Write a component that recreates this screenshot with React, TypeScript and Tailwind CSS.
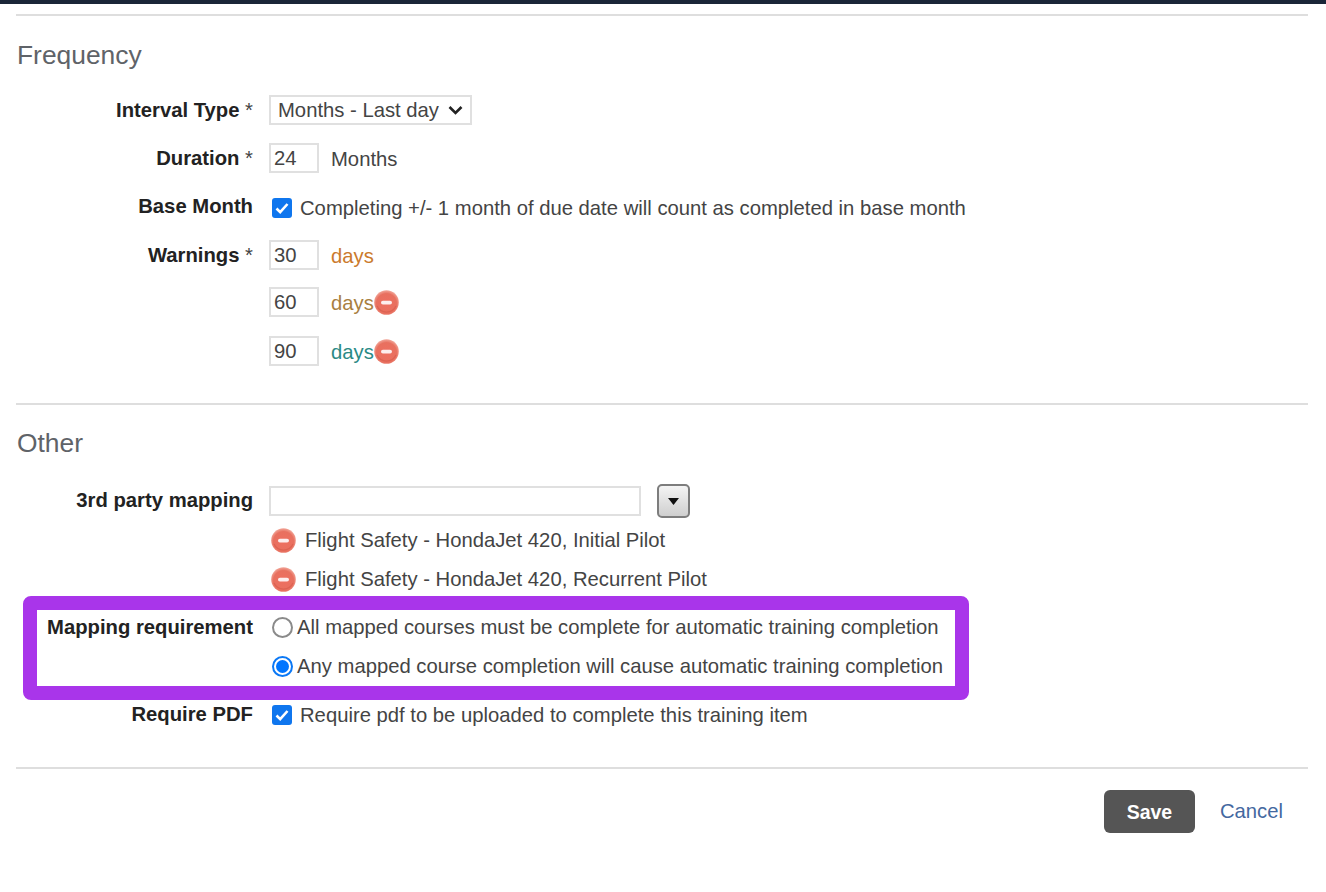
import { ReactNode } from "react";

// ── small pieces ─────────────────────────────────────────────────────────

function RemoveIcon() {
  return (
    <svg viewBox="0 0 25 25" className="w-[25px] h-[25px] shrink-0">
      <defs>
        <radialGradient id="removeFill" cx="0.5" cy="0.55" r="0.55">
          <stop offset="0" stopColor="#ee6f60" />
          <stop offset="0.75" stopColor="#e8705f" />
          <stop offset="1" stopColor="#f2a99c" />
        </radialGradient>
      </defs>
      <circle cx="12.5" cy="12.5" r="12.3" fill="url(#removeFill)" />
      <path d="M3 16 A10.5 10.5 0 0 0 22 16" fill="none" stroke="#dd6252" strokeWidth="1.2" />
      <rect x="7" y="10.7" width="11" height="3.8" rx="1.9" fill="#fdeeee" />
    </svg>
  );
}

function CheckBox() {
  return (
    <span className="w-[20px] h-[20px] shrink-0 rounded-[3px] bg-[#0f76ee] flex items-center justify-center">
      <svg viewBox="0 0 20 20" className="w-[20px] h-[20px]" fill="none">
        <path d="M4.5 10.5 L8.2 14.2 L15.5 6" stroke="#fff" strokeWidth="2.6" />
      </svg>
    </span>
  );
}

function Radio({ checked }: { checked?: boolean }) {
  return checked ? (
    <span className="w-[21px] h-[21px] shrink-0 rounded-full border-2 border-[#0b78f5] flex items-center justify-center">
      <span className="w-[13px] h-[13px] rounded-full bg-[#0075ff]" />
    </span>
  ) : (
    <span className="w-[21px] h-[21px] shrink-0 rounded-full border-2 border-[#8a8a8a] bg-white" />
  );
}

function NumBox({ value }: { value: string }) {
  return (
    <span className="w-[50px] h-[30px] shrink-0 border-2 border-[#e0e0e0] bg-white pl-[3px] flex items-center text-[#444]">
      {value}
    </span>
  );
}

function Unit({ className, children }: { className?: string; children: ReactNode }) {
  return <span className={`ml-[12px] h-[30px] leading-[32px] ${className ?? ""}`}>{children}</span>;
}

function Row({
  label, star, className, contentClassName, children,
}: {
  label?: string;
  star?: boolean;
  className?: string;
  contentClassName?: string;
  children: ReactNode;
}) {
  return (
    <div className={`flex ${className ?? ""}`}>
      <div className="w-[253px] shrink-0 text-right font-bold text-[#222]">
        {label}
        {star && <span className="font-normal text-[#444]"> *</span>}
      </div>
      <div className={`pl-[16px] flex items-center ${contentClassName ?? ""}`}>{children}</div>
    </div>
  );
}

function SectionTitle({ children }: { children: ReactNode }) {
  return <h2 className="text-[26.4px] leading-[30px] text-[#5f6368] pl-[1px]">{children}</h2>;
}

export default function App() {
  return (
    <div className="w-[1326px] h-[892px] bg-white overflow-hidden text-[20.25px] leading-[30px] text-[#444] font-['Liberation_Sans',Arial,sans-serif]">
      <div className="h-[4px] bg-[#1a2638]" />

      <div className="px-[16px] w-[1308px] box-content">
        <hr className="mt-[10px] border-0 h-[2px] bg-[#dedede] w-[1292px]" />

        {/* Frequency */}
        <div className="mt-[24px]">
          <SectionTitle>Frequency</SectionTitle>
        </div>

        <div className="-ml-[16px] mt-[25px]">
          <Row label="Interval Type" star>
            <span className="w-[203px] h-[30px] border-2 border-[#e0e0e0] pl-[7px] pr-[7px] flex items-center justify-between">
              Months - Last day
              <svg viewBox="0 0 15 10" className="w-[15px] h-[10px]" fill="none">
                <path d="M1.5 2 L7.5 8 L13.5 2" stroke="#222" strokeWidth="2.6" />
              </svg>
            </span>
          </Row>
          <Row label="Duration" star className="mt-[18px]">
            <NumBox value="24" />
            <Unit>Months</Unit>
          </Row>
          <Row label="Base Month" className="mt-[18px]" contentClassName="pt-[2px]">
            <span className="pl-[3px]"><CheckBox /></span>
            <span className="ml-[8px]">Completing +/- 1 month of due date will count as completed in base month</span>
          </Row>
          <Row label="Warnings" star className="mt-[17px]">
            <NumBox value="30" />
            <Unit className="text-[#cb7a2c]">days</Unit>
          </Row>
          <Row className="mt-[17px]">
            <NumBox value="60" />
            <Unit className="text-[#a9803f]">days</Unit>
            <RemoveIcon />
          </Row>
          <Row className="mt-[19px]">
            <NumBox value="90" />
            <Unit className="text-[#2a8a85]">days</Unit>
            <RemoveIcon />
          </Row>
        </div>

        <hr className="mt-[37px] border-0 h-[2px] bg-[#dedede] w-[1292px]" />

        {/* Other */}
        <div className="mt-[23px]">
          <SectionTitle>Other</SectionTitle>
        </div>

        <div className="-ml-[16px] mt-[27px]">
          <Row label="3rd party mapping" contentClassName="-mt-[1px]">
            <span className="w-[372px] h-[30px] border-2 border-[#e0e0e0] bg-white" />
            <span className="ml-[16px] w-[33px] h-[34px] rounded-[5px] border-2 border-[#7d7d7d] bg-gradient-to-b from-[#f4f4f4] to-[#cfcfcf] flex items-center justify-center">
              <svg viewBox="0 0 11 7" className="w-[11px] h-[7px]">
                <path d="M0 0 H11 L5.5 7 Z" fill="#111" />
              </svg>
            </span>
          </Row>
          <div className="pl-[271px] mt-[7px] flex items-center h-[30px]">
            <RemoveIcon />
            <span className="ml-[9px]">Flight Safety - HondaJet 420, Initial Pilot</span>
          </div>
          <div className="pl-[271px] mt-[9px] flex items-center h-[30px]">
            <RemoveIcon />
            <span className="ml-[9px]">Flight Safety - HondaJet 420, Recurrent Pilot</span>
          </div>
        </div>

        {/* Highlighted requirement block */}
        <div className="-ml-[16px] mt-[2px]">
          <div className="ml-[23px] w-[946px] h-[104px] rounded-[8px] border-[14px] border-[#a935ea] bg-white">
            <div className="-ml-[37px] mt-[2px]">
              <Row label="Mapping requirement">
                <span className="ml-[3px] flex"><Radio /></span>
                <span className="ml-[4px] whitespace-nowrap">All mapped courses must be complete for automatic training completion</span>
              </Row>
            </div>
            <div className="-ml-[37px] mt-[9px] pl-[272px] flex items-center h-[30px]">
              <Radio checked />
              <span className="ml-[4px] whitespace-nowrap">Any mapped course completion will cause automatic training completion</span>
            </div>
          </div>
        </div>

        <div className="-ml-[16px] -mt-[1px]">
          <Row label="Require PDF" contentClassName="pt-[1px]">
            <span className="pl-[3px]"><CheckBox /></span>
            <span className="ml-[8px]">Require pdf to be uploaded to complete this training item</span>
          </Row>
        </div>

        <hr className="mt-[37px] border-0 h-[2px] bg-[#dedede] w-[1292px]" />

        <div className="mt-[21px] w-[1267px] flex justify-end items-center">
          <button className="w-[91px] h-[43px] rounded-[6px] bg-[#555] text-white text-[19.5px] font-bold">Save</button>
          <a className="ml-[25px] text-[#44689f] -mt-[2px]">Cancel</a>
        </div>
      </div>
    </div>
  );
}
